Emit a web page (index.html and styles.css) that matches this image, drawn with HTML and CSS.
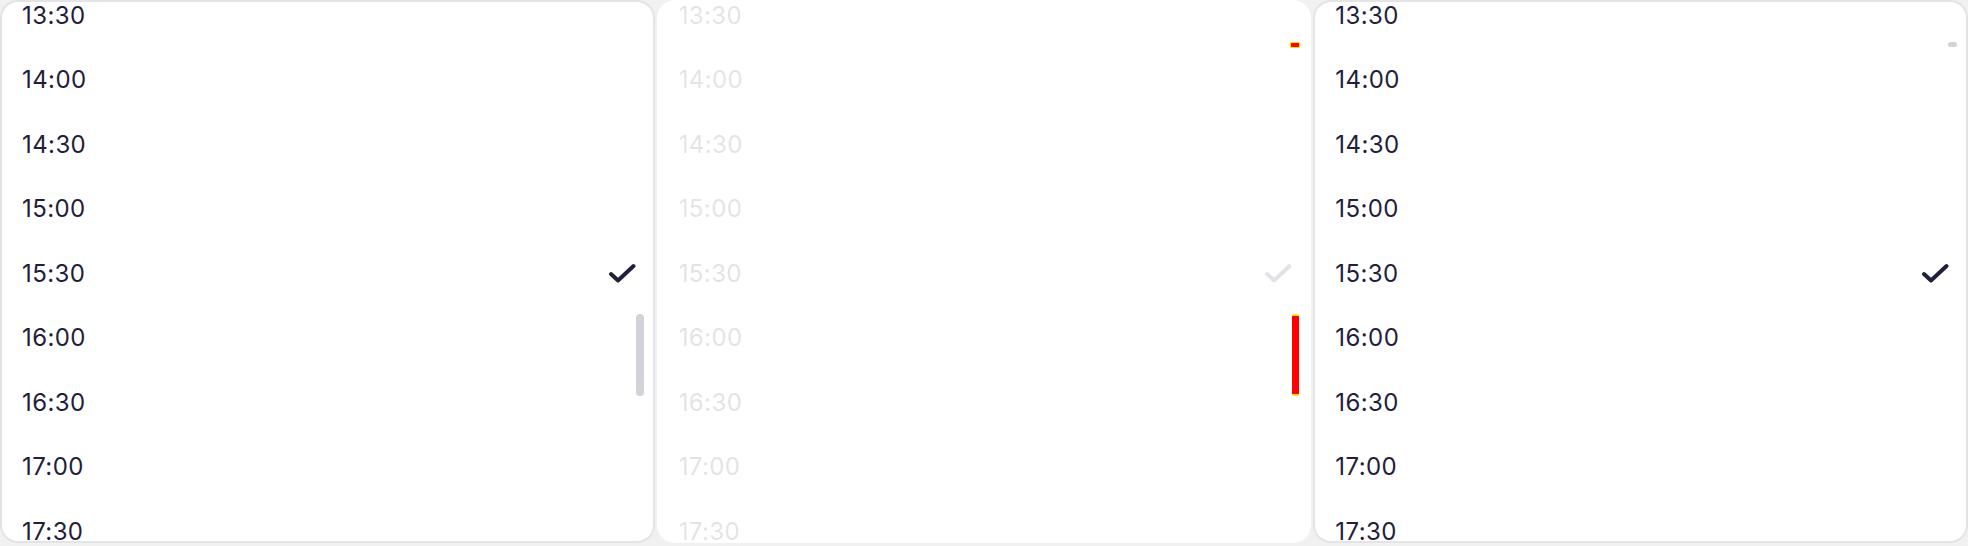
FILE: index.html
```html
<!DOCTYPE html>
<html>
<head>
<meta charset="utf-8">
<link rel="stylesheet" href="styles.css">
</head>
<body>
<div class="panels">
  <div class="panel">
    <ul class="list">
      <li class="row">13:30</li>
      <li class="row">14:00</li>
      <li class="row">14:30</li>
      <li class="row">15:00</li>
      <li class="row selected">15:30<svg class="check" viewBox="0 0 28 20" width="28" height="20"><path d="M3 11 L10 17.5 L25.5 3" /></svg></li>
      <li class="row">16:00</li>
      <li class="row">16:30</li>
      <li class="row">17:00</li>
      <li class="row">17:30</li>
    </ul>
    <div class="thumb"></div>
  </div>
  <div class="panel ghost-wrap">
    <div class="ghost">
      <ul class="list">
        <li class="row">13:30</li>
        <li class="row">14:00</li>
        <li class="row">14:30</li>
        <li class="row">15:00</li>
        <li class="row selected">15:30<svg class="check" viewBox="0 0 28 20" width="28" height="20"><path d="M3 11 L10 17.5 L25.5 3" /></svg></li>
        <li class="row">16:00</li>
        <li class="row">16:30</li>
        <li class="row">17:00</li>
        <li class="row">17:30</li>
      </ul>
    </div>
    <div class="mark-top"></div>
    <div class="mark-thumb"></div>
  </div>
  <div class="panel">
    <ul class="list">
      <li class="row">13:30</li>
      <li class="row">14:00</li>
      <li class="row">14:30</li>
      <li class="row">15:00</li>
      <li class="row selected">15:30<svg class="check" viewBox="0 0 28 20" width="28" height="20"><path d="M3 11 L10 17.5 L25.5 3" /></svg></li>
      <li class="row">16:00</li>
      <li class="row">16:30</li>
      <li class="row">17:00</li>
      <li class="row">17:30</li>
    </ul>
    <div class="pill"></div>
  </div>
</div>
</body>
</html>
```

FILE: styles.css
```css
* { box-sizing: border-box; }
html, body {
  margin: 0;
  padding: 0;
  background: #f1f1f2;
  width: 1968px;
  height: 546px;
  overflow: hidden;
}
.panels {
  display: flex;
  gap: 2px;
  height: 543px;
}
.panel {
  flex: 1;
  position: relative;
  background: #fff;
  border: 2px solid #e4e4e6;
  border-radius: 18px;
  overflow: hidden;
}
.ghost-wrap {
  border-color: transparent;
  background: #fff;
}
.ghost {
  position: absolute;
  inset: -2px;
  border: 2px solid #e4e4e6;
  border-radius: 18px;
  background: #fff;
  opacity: 0.12;
  overflow: hidden;
}
.list {
  list-style: none;
  margin: -19px 0 0 0;
  padding: 0;
}
.row {
  height: 64.5px;
  display: flex;
  align-items: center;
  justify-content: space-between;
  padding: 0 17px 0 20px;
  font-family: "Inter", "Liberation Sans", sans-serif;
  font-size: 24px;
  font-weight: 400;
  color: #1e2139;
  letter-spacing: 0.4px;
}
.check path {
  fill: none;
  stroke: #1e2139;
  stroke-width: 4;
  stroke-linecap: round;
  stroke-linejoin: round;
}
.thumb {
  position: absolute;
  right: 9px;
  top: 312px;
  width: 8px;
  height: 82px;
  border-radius: 4px;
  background: #d2d2d8;
}
.pill {
  position: absolute;
  right: 9px;
  top: 40px;
  width: 9px;
  height: 5px;
  border-radius: 3px;
  background: #d2d2d8;
}
.mark-top {
  position: absolute;
  right: 10px;
  top: 41px;
  width: 8px;
  height: 4px;
  background: #ff0000;
  box-shadow: 0 0 0 1px #ffe600;
}
.mark-thumb {
  position: absolute;
  right: 10px;
  top: 312px;
  width: 7px;
  height: 82px;
  background: #ff0000;
  border-top: 2px solid #ffe600;
  border-bottom: 2px solid #ffe600;
  border-radius: 2px;
}
```
